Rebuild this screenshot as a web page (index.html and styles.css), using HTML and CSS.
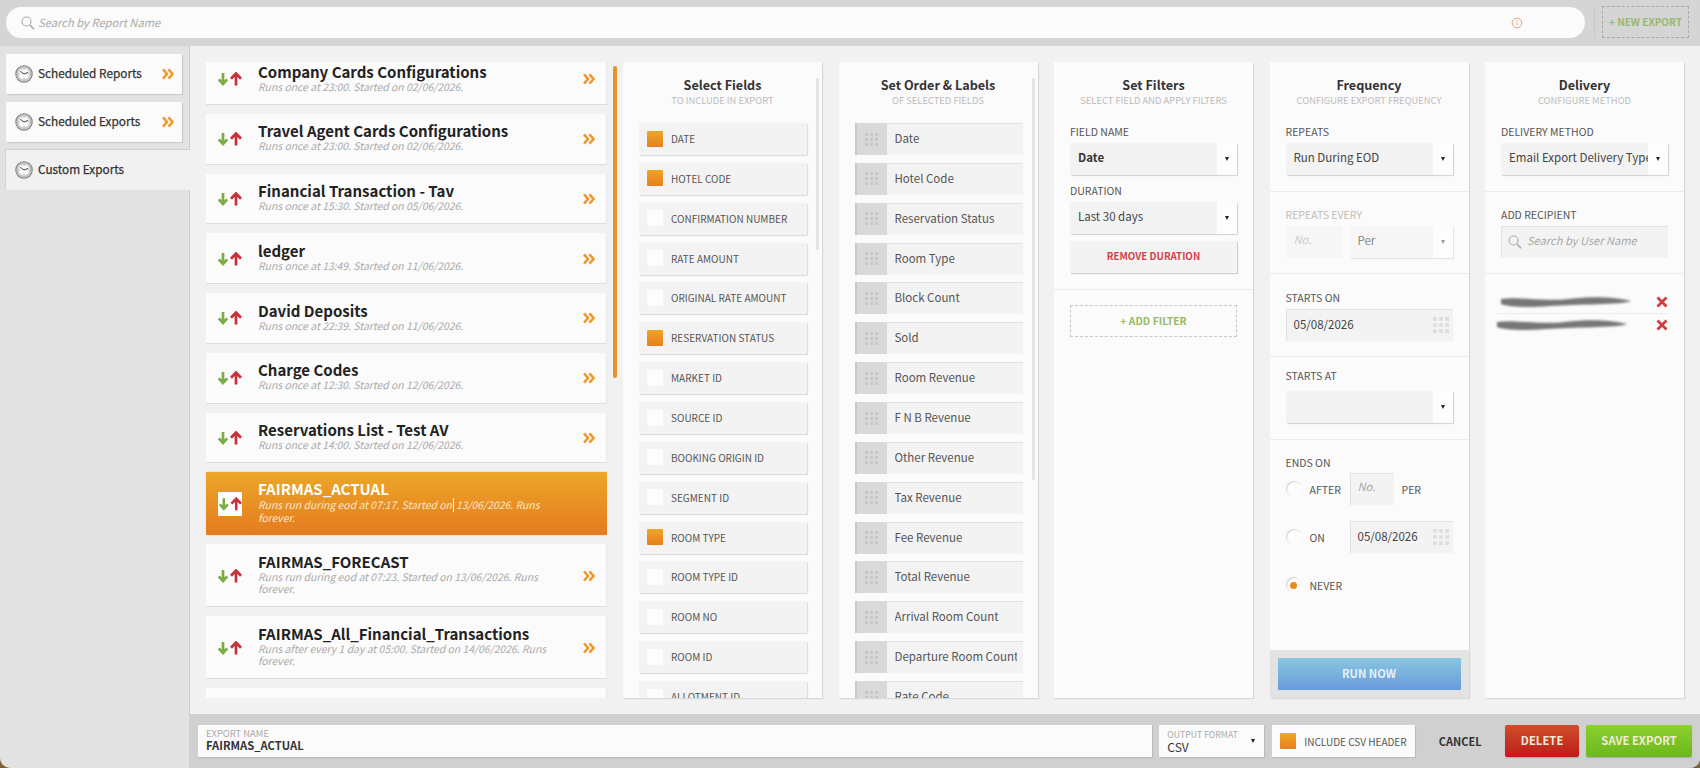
FILE: index.html
```html
<!DOCTYPE html>
<html lang="en">
<head>
	<meta charset="UTF-8">
	<title>Custom Exports</title>
	<link rel="stylesheet" href="styles.css">
</head>
<body>
	<svg class="defs" width="0" height="0">
		<symbol id="clock" viewBox="0 0 18 18">
			<circle cx="9" cy="9" r="8.200" fill="#cfcfcf" stroke="#7f7f7f" stroke-width="1.100"/>
			<circle cx="9" cy="9" r="6.200" fill="#f8f8f8" stroke="#999" stroke-width=".6"/>
			<path d="M9 9 5.300 6.300M9 9l4.200-1.600" fill="none" stroke="#444" stroke-width="1"/>
			<path d="M9 3.500v1.200M9 13.300v1.200M3.500 9h1.200M13.300 9h1.200" stroke="#777" stroke-width=".8"/>
		</symbol>
		<symbol id="chev" viewBox="0 0 12 12">
			<path d="M1 1.300 5 6 1 10.700M6.500 1.300 10.500 6 6.500 10.700" fill="none" stroke="#ee9a2e" stroke-width="2.600"/>
		</symbol>
		<symbol id="arrows" viewBox="0 0 24 14">
			<path d="M5 1v11M.8 7.300 5 12 9.200 7.300" fill="none" stroke="#7cab46" stroke-width="2.700"/>
			<path d="M18 13.500V2.500M13 6.700 18 1.500 23 6.700" fill="none" stroke="#c9303a" stroke-width="2.700"/>
		</symbol>
		<symbol id="dots" viewBox="0 0 13 13">
			<path fill="currentColor" d="M0 0h3v3H0zM5 0h3v3H5zM10 0h3v3h-3zM0 5h3v3H0zM5 5h3v3H5zM10 5h3v3h-3zM0 10h3v3H0zM5 10h3v3H5zM10 10h3v3h-3z"/>
		</symbol>
		<symbol id="search" viewBox="0 0 14 14">
			<circle cx="5.500" cy="5.500" r="4.500" fill="none" stroke="#aaa" stroke-width="1.100"/>
			<path d="M9 9l4 4.300" stroke="#aaa" stroke-width="1.600"/>
		</symbol>
		<symbol id="smear" viewBox="0 0 136 16">
			<path fill="#777" d="M3 5C20 2 40 8 70 5 95 2 118 3 133 7 125 11 80 10 52 12 30 14 10 13 3 10Z"/>
		</symbol>
	</svg>

	<div class="app">
		<div class="topbar">
			<div class="search-main">
				<svg class="icon-search"><use href="#search"/></svg>
				<span class="search-text">Search by Report Name</span>
				<svg class="icon-info" viewBox="0 0 12 12"><circle cx="6" cy="6" r="4.800" fill="none" stroke="#ef9f78" stroke-width="1"/><path d="M6 5.300v3M6 3.400v1" stroke="#ef9f78" stroke-width="1"/></svg>
			</div>
			<div class="new-export">+ NEW EXPORT</div>
		</div>

		<div class="main">
			<div class="rail">
				<div class="rail-item">
					<svg class="icon-clock"><use href="#clock"/></svg>
					<span class="rail-label">Scheduled Reports</span>
					<svg class="icon-chev"><use href="#chev"/></svg>
				</div>
				<div class="rail-item">
					<svg class="icon-clock"><use href="#clock"/></svg>
					<span class="rail-label">Scheduled Exports</span>
					<svg class="icon-chev"><use href="#chev"/></svg>
				</div>
				<div class="rail-item rail-active">
					<svg class="icon-clock"><use href="#clock"/></svg>
					<span class="rail-label">Custom Exports</span>
				</div>
			</div>

			<div class="content">
				<div class="workspace">
					<div class="report-list">
						<div class="report first">
							<svg class="icon-arrows"><use href="#arrows"/></svg>
							<div class="report-text"><div class="report-name">Company Cards Configurations</div><div class="report-sub">Runs once at 23:00. Started on 02/06/2026.</div></div>
							<svg class="icon-chev"><use href="#chev"/></svg>
						</div>
						<div class="report">
							<svg class="icon-arrows"><use href="#arrows"/></svg>
							<div class="report-text"><div class="report-name">Travel Agent Cards Configurations</div><div class="report-sub">Runs once at 23:00. Started on 02/06/2026.</div></div>
							<svg class="icon-chev"><use href="#chev"/></svg>
						</div>
						<div class="report">
							<svg class="icon-arrows"><use href="#arrows"/></svg>
							<div class="report-text"><div class="report-name">Financial Transaction - Tav</div><div class="report-sub">Runs once at 15:30. Started on 05/06/2026.</div></div>
							<svg class="icon-chev"><use href="#chev"/></svg>
						</div>
						<div class="report">
							<svg class="icon-arrows"><use href="#arrows"/></svg>
							<div class="report-text"><div class="report-name">ledger</div><div class="report-sub">Runs once at 13:49. Started on 11/06/2026.</div></div>
							<svg class="icon-chev"><use href="#chev"/></svg>
						</div>
						<div class="report">
							<svg class="icon-arrows"><use href="#arrows"/></svg>
							<div class="report-text"><div class="report-name">David Deposits</div><div class="report-sub">Runs once at 22:39. Started on 11/06/2026.</div></div>
							<svg class="icon-chev"><use href="#chev"/></svg>
						</div>
						<div class="report">
							<svg class="icon-arrows"><use href="#arrows"/></svg>
							<div class="report-text"><div class="report-name">Charge Codes</div><div class="report-sub">Runs once at 12:30. Started on 12/06/2026.</div></div>
							<svg class="icon-chev"><use href="#chev"/></svg>
						</div>
						<div class="report">
							<svg class="icon-arrows"><use href="#arrows"/></svg>
							<div class="report-text"><div class="report-name">Reservations List - Test AV</div><div class="report-sub">Runs once at 14:00. Started on 12/06/2026.</div></div>
							<svg class="icon-chev"><use href="#chev"/></svg>
						</div>
						<div class="report tall report-active">
							<div class="arrow-box"><svg class="icon-arrows"><use href="#arrows"/></svg></div>
							<div class="report-text"><div class="report-name">FAIRMAS_ACTUAL</div><div class="report-sub">Runs run during eod at 07:17. Started on<span class="caret"></span>13/06/2026. Runs forever.</div></div>
						</div>
						<div class="report tall">
							<svg class="icon-arrows"><use href="#arrows"/></svg>
							<div class="report-text"><div class="report-name">FAIRMAS_FORECAST</div><div class="report-sub">Runs run during eod at 07:23. Started on 13/06/2026. Runs forever.</div></div>
							<svg class="icon-chev"><use href="#chev"/></svg>
						</div>
						<div class="report tall">
							<svg class="icon-arrows"><use href="#arrows"/></svg>
							<div class="report-text"><div class="report-name">FAIRMAS_All_Financial_Transactions</div><div class="report-sub">Runs after every 1 day at 05:00. Started on 14/06/2026. Runs forever.</div></div>
							<svg class="icon-chev"><use href="#chev"/></svg>
						</div>
						<div class="report"></div>
					</div>
					<div class="list-scroll"></div>

					<div class="panel">
						<div class="panel-head"><h2>Select Fields</h2><p>TO INCLUDE IN EXPORT</p></div>
						<div class="panel-thumb thumb-fields"></div>
						<div class="field-list">
							<div class="field"><span class="check on"></span>DATE</div>
							<div class="field"><span class="check on"></span>HOTEL CODE</div>
							<div class="field"><span class="check"></span>CONFIRMATION NUMBER</div>
							<div class="field"><span class="check"></span>RATE AMOUNT</div>
							<div class="field"><span class="check"></span>ORIGINAL RATE AMOUNT</div>
							<div class="field"><span class="check on"></span>RESERVATION STATUS</div>
							<div class="field"><span class="check"></span>MARKET ID</div>
							<div class="field"><span class="check"></span>SOURCE ID</div>
							<div class="field"><span class="check"></span>BOOKING ORIGIN ID</div>
							<div class="field"><span class="check"></span>SEGMENT ID</div>
							<div class="field"><span class="check on"></span>ROOM TYPE</div>
							<div class="field"><span class="check"></span>ROOM TYPE ID</div>
							<div class="field"><span class="check"></span>ROOM NO</div>
							<div class="field"><span class="check"></span>ROOM ID</div>
							<div class="field"><span class="check"></span>ALLOTMENT ID</div>
						</div>
					</div>

					<div class="panel">
						<div class="panel-head"><h2>Set Order &amp; Labels</h2><p>OF SELECTED FIELDS</p></div>
						<div class="panel-thumb thumb-order"></div>
						<div class="field-list">
							<div class="order"><span class="handle"><svg class="icon-dots"><use href="#dots"/></svg></span><span class="order-label">Date</span></div>
							<div class="order"><span class="handle"><svg class="icon-dots"><use href="#dots"/></svg></span><span class="order-label">Hotel Code</span></div>
							<div class="order"><span class="handle"><svg class="icon-dots"><use href="#dots"/></svg></span><span class="order-label">Reservation Status</span></div>
							<div class="order"><span class="handle"><svg class="icon-dots"><use href="#dots"/></svg></span><span class="order-label">Room Type</span></div>
							<div class="order"><span class="handle"><svg class="icon-dots"><use href="#dots"/></svg></span><span class="order-label">Block Count</span></div>
							<div class="order"><span class="handle"><svg class="icon-dots"><use href="#dots"/></svg></span><span class="order-label">Sold</span></div>
							<div class="order"><span class="handle"><svg class="icon-dots"><use href="#dots"/></svg></span><span class="order-label">Room Revenue</span></div>
							<div class="order"><span class="handle"><svg class="icon-dots"><use href="#dots"/></svg></span><span class="order-label">F N B Revenue</span></div>
							<div class="order"><span class="handle"><svg class="icon-dots"><use href="#dots"/></svg></span><span class="order-label">Other Revenue</span></div>
							<div class="order"><span class="handle"><svg class="icon-dots"><use href="#dots"/></svg></span><span class="order-label">Tax Revenue</span></div>
							<div class="order"><span class="handle"><svg class="icon-dots"><use href="#dots"/></svg></span><span class="order-label">Fee Revenue</span></div>
							<div class="order"><span class="handle"><svg class="icon-dots"><use href="#dots"/></svg></span><span class="order-label">Total Revenue</span></div>
							<div class="order"><span class="handle"><svg class="icon-dots"><use href="#dots"/></svg></span><span class="order-label">Arrival Room Count</span></div>
							<div class="order"><span class="handle"><svg class="icon-dots"><use href="#dots"/></svg></span><span class="order-label">Departure Room Count</span></div>
							<div class="order"><span class="handle"><svg class="icon-dots"><use href="#dots"/></svg></span><span class="order-label">Rate Code</span></div>
						</div>
					</div>

					<div class="panel">
						<div class="panel-head"><h2>Set Filters</h2><p>SELECT FIELD AND APPLY FILTERS</p></div>
						<div class="section sec-filters">
							<label class="lbl">FIELD NAME</label>
							<div class="select"><span class="select-val strong">Date</span><span class="select-btn"><i class="tri"></i></span></div>
							<label class="lbl lbl-next">DURATION</label>
							<div class="select"><span class="select-val">Last 30 days</span><span class="select-btn"><i class="tri"></i></span></div>
							<div class="remove-btn">REMOVE DURATION</div>
						</div>
						<div class="section sec-add">
							<div class="add-filter">+ ADD FILTER</div>
						</div>
					</div>

					<div class="panel">
						<div class="panel-head"><h2>Frequency</h2><p>CONFIGURE EXPORT FREQUENCY</p></div>
						<div class="section">
							<label class="lbl">REPEATS</label>
							<div class="select"><span class="select-val">Run During EOD</span><span class="select-btn"><i class="tri"></i></span></div>
						</div>
						<div class="section sec-second">
							<label class="lbl lbl-off">REPEATS EVERY</label>
							<div class="repeat-row">
								<div class="num-input off">No.</div>
								<div class="select select-off"><span class="select-val">Per</span><span class="select-btn"><i class="tri"></i></span></div>
							</div>
						</div>
						<div class="section sec-start">
							<label class="lbl">STARTS ON</label>
							<div class="date-input"><span>05/08/2026</span><svg class="icon-cal"><use href="#dots"/></svg></div>
						</div>
						<div class="section sec-at">
							<label class="lbl">STARTS AT</label>
							<div class="select"><span class="select-val"></span><span class="select-btn"><i class="tri"></i></span></div>
						</div>
						<div class="section sec-ends">
							<label class="lbl">ENDS ON</label>
							<div class="ends-row">
								<span class="radio"></span><span class="radio-label">AFTER</span>
								<div class="num-input">No.</div><span class="per">PER</span>
							</div>
							<div class="ends-row">
								<span class="radio"></span><span class="radio-label">ON</span>
								<div class="date-input date-small"><span>05/08/2026</span><svg class="icon-cal"><use href="#dots"/></svg></div>
							</div>
							<div class="ends-row">
								<span class="radio radio-on"></span><span class="radio-label">NEVER</span>
							</div>
						</div>
						<div class="run-bar"><div class="run-btn">RUN NOW</div></div>
					</div>

					<div class="panel">
						<div class="panel-head"><h2>Delivery</h2><p>CONFIGURE METHOD</p></div>
						<div class="section">
							<label class="lbl">DELIVERY METHOD</label>
							<div class="select"><span class="select-val">Email Export Delivery Type</span><span class="select-btn"><i class="tri"></i></span></div>
						</div>
						<div class="section sec-second">
							<label class="lbl">ADD RECIPIENT</label>
							<div class="user-search"><svg class="icon-user"><use href="#search"/></svg><span>Search by User Name</span></div>
						</div>
						<div class="recipients">
							<div class="recipient"><svg class="blur-name"><use href="#smear"/></svg><svg class="icon-x" viewBox="0 0 12 12"><path d="M1.500 1.500l9 9M10.500 1.500l-9 9" stroke="#d23b41" stroke-width="2.800"/></svg></div>
							<div class="recipient"><svg class="blur-name name-b"><use href="#smear"/></svg><svg class="icon-x" viewBox="0 0 12 12"><path d="M1.500 1.500l9 9M10.500 1.500l-9 9" stroke="#d23b41" stroke-width="2.800"/></svg></div>
						</div>
					</div>
				</div>

				<div class="footer">
					<div class="foot-box foot-name"><span class="foot-cap">EXPORT NAME</span><span class="foot-val">FAIRMAS_ACTUAL</span></div>
					<div class="foot-box foot-format">
						<div><span class="foot-cap">OUTPUT FORMAT</span><span class="foot-val">CSV</span></div>
						<i class="tri"></i>
					</div>
					<div class="foot-box foot-csv"><span class="check on"></span>INCLUDE CSV HEADER</div>
					<div class="cancel">CANCEL</div>
					<div class="btn btn-delete">DELETE</div>
					<div class="btn btn-save">SAVE EXPORT</div>
				</div>
			</div>
		</div>
	</div>
</body>
</html>
```

FILE: styles.css
```css
* {
	box-sizing: border-box;
}
html, body {
	margin: 0;
	padding: 0;
}
body {
	background: #7a6238;
	font-family: "Noto Sans CJK JP", "Noto Sans", sans-serif;
	color: #444;
	width: 1700px;
	height: 768px;
	overflow: hidden;
}
h2, p {
	margin: 0;
}
.defs {
	position: absolute;
}
.app {
	width: 1700px;
	height: 768px;
	display: flex;
	flex-direction: column;
	overflow: hidden;
	background: #e2e2e2;
	border-radius: 0 0 10px 10px;
}

/* top bar */
.topbar {
	height: 46px;
	flex: none;
	background: #d5d5d5;
	display: flex;
	align-items: flex-start;
	padding: 7px 11px 0 6px;
}
.search-main {
	width: 1579px;
	height: 31px;
	background: #fbfbfb;
	border-radius: 16px;
	display: flex;
	align-items: center;
	padding: 0 15px;
}
.icon-search {
	width: 14px;
	height: 14px;
	margin-right: 3px;
}
.search-text {
	font-size: 11.200px;
	font-style: italic;
	color: #aaa;
	flex: 1;
	padding-bottom: 1px;
}
.icon-info {
	width: 12px;
	height: 12px;
	margin-right: 47px;
}
.new-export {
	margin: -1px 0 0 17px;
	width: 87px;
	height: 32px;
	border: 1px dashed #a8a8a8;
	font-size: 10px;
	font-weight: 700;
	color: #9ab86e;
	text-align: center;
	line-height: 30px;
	white-space: nowrap;
	position: relative;
}
.new-export::before {
	content: "";
	position: absolute;
	left: -9px;
	top: 0;
	bottom: -1px;
	width: 1px;
	background: #c6c6c6;
}

/* left rail */
.main {
	flex: 1;
	display: flex;
	min-height: 0;
}
.rail {
	width: 190px;
	flex: none;
	padding: 8px 0 0 6px;
	display: flex;
	flex-direction: column;
	gap: 8px;
}
.rail-item {
	width: 176px;
	height: 40px;
	background: #fbfbfb;
	box-shadow: 1px 1px 1px #c8c8c8;
	border-radius: 1px;
	display: flex;
	align-items: center;
	padding: 0 8px 0 9px;
}
.rail-active {
	width: 185px;
	background: #f1f1f1;
	box-shadow: -1px -1px 0 #d2d2d2;
	position: relative;
	z-index: 1;
}
.icon-clock {
	width: 18px;
	height: 18px;
	margin-right: 5px;
	flex: none;
}
.rail-label {
	font-size: 11.800px;
	color: #333;
	flex: 1;
	padding-bottom: 3px;
	-webkit-text-stroke: .25px #333;
}
.icon-chev {
	width: 12px;
	height: 12px;
	flex: none;
}

/* work area */
.content {
	flex: 1;
	display: flex;
	flex-direction: column;
	min-width: 0;
	border-left: 1px solid #cfcfcf;
	margin-left: -1px;
}
.workspace {
	flex: 1;
	min-height: 0;
	background: #f1f1f1;
	padding: 16px;
	display: flex;
}
.report-list {
	width: 401px;
	flex: none;
	overflow: hidden;
}
.report {
	height: 50.750px;
	margin-bottom: 9px;
	background: #fbfbfb;
	box-shadow: inset 0 -1px 0 #dcdcdc, inset -1px 0 0 #e8e8e8;
	display: flex;
	align-items: center;
	padding: 0 12px;
}
.report.first {
	margin-top: -8px;
}
.report.tall {
	height: 63px;
}
.icon-arrows {
	width: 24px;
	height: 14px;
	flex: none;
}
.report-text {
	width: 300px;
	margin-left: 16px;
	margin-right: auto;
	line-height: 1;
}
.report-name {
	font-size: 15px;
	font-weight: 700;
	color: #222;
	line-height: 18px;
	margin-top: -4px;
}
.report-sub {
	font-size: 10.400px;
	font-style: italic;
	color: #aaa;
	line-height: 11.500px;
}
.report-active {
	background: linear-gradient(#eba729, #e57b1f);
	box-shadow: 0 0 1px #b0691c;
	border-radius: 1px;
}
.report-active .report-name {
	color: #fff;
}
.report-active .report-sub {
	color: #fbe6cd;
}
.arrow-box {
	width: 24px;
	height: 24px;
	background: #fff;
	display: flex;
	align-items: center;
	justify-content: center;
	border-radius: 1px;
	flex: none;
}
.arrow-box .icon-arrows {
	width: 23px;
}
.caret {
	display: inline-block;
	width: 1px;
	height: 14px;
	background: #fff;
	margin: 0 2px 0 1px;
	vertical-align: -3px;
}
.list-scroll {
	width: 4px;
	height: 312px;
	margin: 4px 6px 0;
	flex: none;
	background: #e8922a;
	border-radius: 2px;
}

/* panels */
.panel {
	width: 199px;
	flex: none;
	margin-right: 16.500px;
	background: #fbfbfb;
	box-shadow: 1px 1px 1px #d8d8d8;
	position: relative;
	overflow: hidden;
	display: flex;
	flex-direction: column;
}
.panel:last-child {
	margin-right: 0;
}
.panel-head {
	height: 61px;
	flex: none;
	padding-top: 14px;
	text-align: center;
}
.panel-head h2 {
	font-size: 12.600px;
	font-weight: 700;
	color: #333;
	line-height: 18px;
}
.panel-head p {
	font-size: 9.400px;
	color: #bbb;
	line-height: 13px;
}
.panel-thumb {
	position: absolute;
	right: 3px;
	top: 16px;
	width: 3px;
	background: #e4e4e4;
	border-radius: 2px;
}
.thumb-fields {
	height: 172px;
}
.thumb-order {
	height: 402px;
}
.field-list {
	display: flex;
	flex-direction: column;
	gap: 7.870px;
	padding-left: 16px;
}
.field {
	width: 168px;
	height: 32px;
	flex: none;
	background: #f3f3f3;
	box-shadow: 1px 1px 1px #d8d8d8;
	border-radius: 1px;
	display: flex;
	align-items: center;
	padding-left: 8px;
	padding-bottom: 1px;
	font-size: 10px;
	color: #555;
	white-space: nowrap;
}
.check {
	width: 16px;
	height: 16px;
	flex: none;
	margin-right: 8px;
	background: #fdfdfd;
	border-radius: 1px;
}
.check.on {
	background: linear-gradient(#eea627, #e67f20);
}
.order {
	width: 168px;
	height: 32px;
	flex: none;
	background: #f3f3f3;
	box-shadow: inset 0 1px 0 #e0e0e0;
	display: flex;
	align-items: center;
	font-size: 11.500px;
	color: #555;
	overflow: hidden;
	white-space: nowrap;
}
.order-label {
	width: 122px;
	overflow: hidden;
	padding-bottom: 2px;
}
.handle {
	width: 32px;
	height: 32px;
	flex: none;
	background: #d9d9d9;
	border-left: 2px solid #c8c8c8;
	display: flex;
	align-items: center;
	justify-content: center;
	margin-right: 8px;
}
.icon-dots {
	width: 13px;
	height: 13px;
	color: #c7c7c7;
}

/* form sections */
.section {
	padding: 0 16px 16px;
	border-bottom: 1px solid #ececec;
	flex: none;
}
.sec-second {
	padding-top: 14px;
	padding-bottom: 15px;
}
.sec-start {
	padding-top: 15px;
	padding-bottom: 15px;
}
.sec-at {
	padding-top: 10px;
}
.sec-at .lbl {
	margin-bottom: 7px;
}
.lbl {
	display: block;
	font-size: 10.500px;
	color: #555;
	line-height: 16px;
	height: 16px;
	margin: 1px 0 3px;
}
.lbl-next {
	margin-top: 8px;
}
.lbl-off {
	color: #bbb;
}
.select {
	height: 32px;
	display: flex;
	background: #f3f3f3;
	box-shadow: 1px 1px 1px #d0d0d0;
	border-radius: 1px;
}
.select-val {
	flex: 1;
	min-width: 0;
	padding-left: 8px;
	font-size: 11.500px;
	line-height: 29px;
	color: #444;
	white-space: nowrap;
	overflow: hidden;
}
.select-val.strong {
	font-weight: 700;
	color: #333;
}
.select-btn {
	width: 20px;
	flex: none;
	background: #fdfdfd;
	display: flex;
	align-items: center;
	justify-content: center;
}
.tri {
	display: block;
	width: 0;
	height: 0;
	border-left: 2.500px solid transparent;
	border-right: 2.500px solid transparent;
	border-top: 4px solid #222;
}
.sec-filters {
	height: 167px;
	padding-bottom: 0;
}
.remove-btn {
	height: 32px;
	margin-top: 7px;
	background: #f3f3f3;
	box-shadow: 1px 1px 1px #d0d0d0;
	text-align: center;
	line-height: 31px;
	font-size: 9.800px;
	font-weight: 700;
	color: #d6404a;
}
.sec-add {
	padding-top: 15px;
	border-bottom: none;
}
.add-filter {
	height: 32px;
	border: 1px dashed #c8c8c8;
	text-align: center;
	line-height: 30px;
	font-size: 10.400px;
	font-weight: 700;
	color: #96bb62;
}
.repeat-row {
	display: flex;
	gap: 8px;
}
.num-input {
	width: 44px;
	height: 32px;
	flex: none;
	background: #f3f3f3;
	box-shadow: inset 1px 1px 0 #e2e2e2;
	padding-left: 8px;
	line-height: 27px;
	font-size: 11.200px;
	font-style: italic;
	color: #aaa;
}
.num-input.off {
	width: 56px;
	color: #ccc;
	background: #f6f6f6;
	box-shadow: none;
}
.select-off {
	flex: 1;
	box-shadow: 1px 1px 1px #e2e2e2;
	background: #f6f6f6;
}
.select-off .select-val {
	color: #888;
}
.select-off .tri {
	border-top-color: #999;
}
.date-input {
	height: 32px;
	background: #f3f3f3;
	box-shadow: inset 1px 1px 0 #e2e2e2;
	display: flex;
	align-items: center;
	justify-content: space-between;
	padding: 0 4px 0 8px;
	font-size: 11.500px;
	color: #444;
}
.date-input span {
	padding-bottom: 3px;
}
.icon-cal {
	width: 16px;
	height: 16px;
	color: #ddd;
}
.sec-ends {
	flex: 1;
	padding-top: 14px;
	border-bottom: none;
}
.sec-ends .lbl {
	margin-bottom: 2px;
}
.ends-row {
	display: flex;
	align-items: center;
	height: 32px;
	margin-bottom: 16px;
}
.radio {
	width: 16px;
	height: 16px;
	flex: none;
	border-radius: 50%;
	background: #fdfdfd;
	box-shadow: inset 1px 1px 1px #d4d4d4;
	margin-right: 8px;
	display: flex;
	align-items: center;
	justify-content: center;
}
.radio-on::after {
	content: "";
	width: 7px;
	height: 7px;
	border-radius: 50%;
	background: #ea8a1f;
}
.radio-label {
	width: 40px;
	font-size: 10.500px;
	color: #555;
}
.per {
	margin-left: 8px;
	font-size: 10.500px;
	color: #555;
}
.date-small {
	width: 103px;
}
.run-bar {
	height: 48px;
	flex: none;
	background: #e3e3e3;
	padding: 8px;
}
.run-btn {
	height: 32px;
	background: linear-gradient(#88c6e0, #6a9bdb);
	border-radius: 1px;
	text-align: center;
	line-height: 30px;
	font-size: 11.200px;
	font-weight: 700;
	color: #e4f0f8;
}
.user-search {
	height: 32px;
	background: #f3f3f3;
	box-shadow: inset 1px 1px 0 #e2e2e2;
	display: flex;
	align-items: center;
	padding-left: 7px;
	font-size: 11.100px;
	font-style: italic;
	color: #aaa;
}
.user-search span {
	padding-bottom: 4px;
}
.icon-user {
	width: 14px;
	height: 14px;
	margin-right: 5px;
}
.recipients {
	padding: 16px 16px 0 12px;
}
.recipient {
	height: 23px;
	display: flex;
	align-items: center;
	justify-content: space-between;
}
.recipient + .recipient {
	border-top: 1px solid #ececec;
}
.blur-name {
	display: block;
	width: 136px;
	height: 16px;
	margin-left: 1px;
	filter: blur(1.300px);
}
.name-b {
	margin-left: -3px;
}
.icon-x {
	width: 12px;
	height: 12px;
	flex: none;
}

/* footer */
.footer {
	height: 54px;
	flex: none;
	background: #d0d0d0;
	display: flex;
	align-items: center;
	padding: 0 8px;
}
.foot-box {
	height: 32px;
	background: #fbfbfb;
	box-shadow: 1px 1px 1px #bbb;
}
.foot-name {
	width: 955px;
	padding-left: 8px;
	margin-right: 7px;
}
.foot-cap {
	display: block;
	font-size: 9.400px;
	color: #aaa;
	line-height: 11px;
	padding-top: 3px;
	white-space: nowrap;
}
.foot-val {
	display: block;
	font-size: 11.200px;
	font-weight: 700;
	color: #333;
	line-height: 13px;
}
.foot-format {
	width: 105px;
	display: flex;
	justify-content: space-between;
	align-items: center;
	padding: 0 9px 0 8px;
	margin-right: 8px;
}
.foot-format .foot-cap {
	font-size: 8.700px;
}
.foot-format .foot-val {
	font-size: 12px;
	font-weight: 400;
}
.foot-format > div {
	padding-bottom: 3px;
}
.foot-csv {
	width: 143px;
	display: flex;
	align-items: center;
	padding-left: 8px;
	font-size: 10px;
	color: #555;
	white-space: nowrap;
}
.cancel {
	width: 90px;
	text-align: center;
	font-size: 11px;
	font-weight: 700;
	color: #333;
}
.btn {
	height: 32px;
	border-radius: 2px;
	text-align: center;
	line-height: 31px;
	font-size: 11.300px;
	font-weight: 700;
	color: #f4e9d8;
	box-shadow: 0 1px 1px #aaa;
}
.btn-delete {
	width: 74px;
	background: linear-gradient(#ce4f28, #bf1b1b);
	margin-right: 7px;
}
.btn-save {
	width: 106px;
	background: linear-gradient(#8ad02e, #6cb81e);
}
```
